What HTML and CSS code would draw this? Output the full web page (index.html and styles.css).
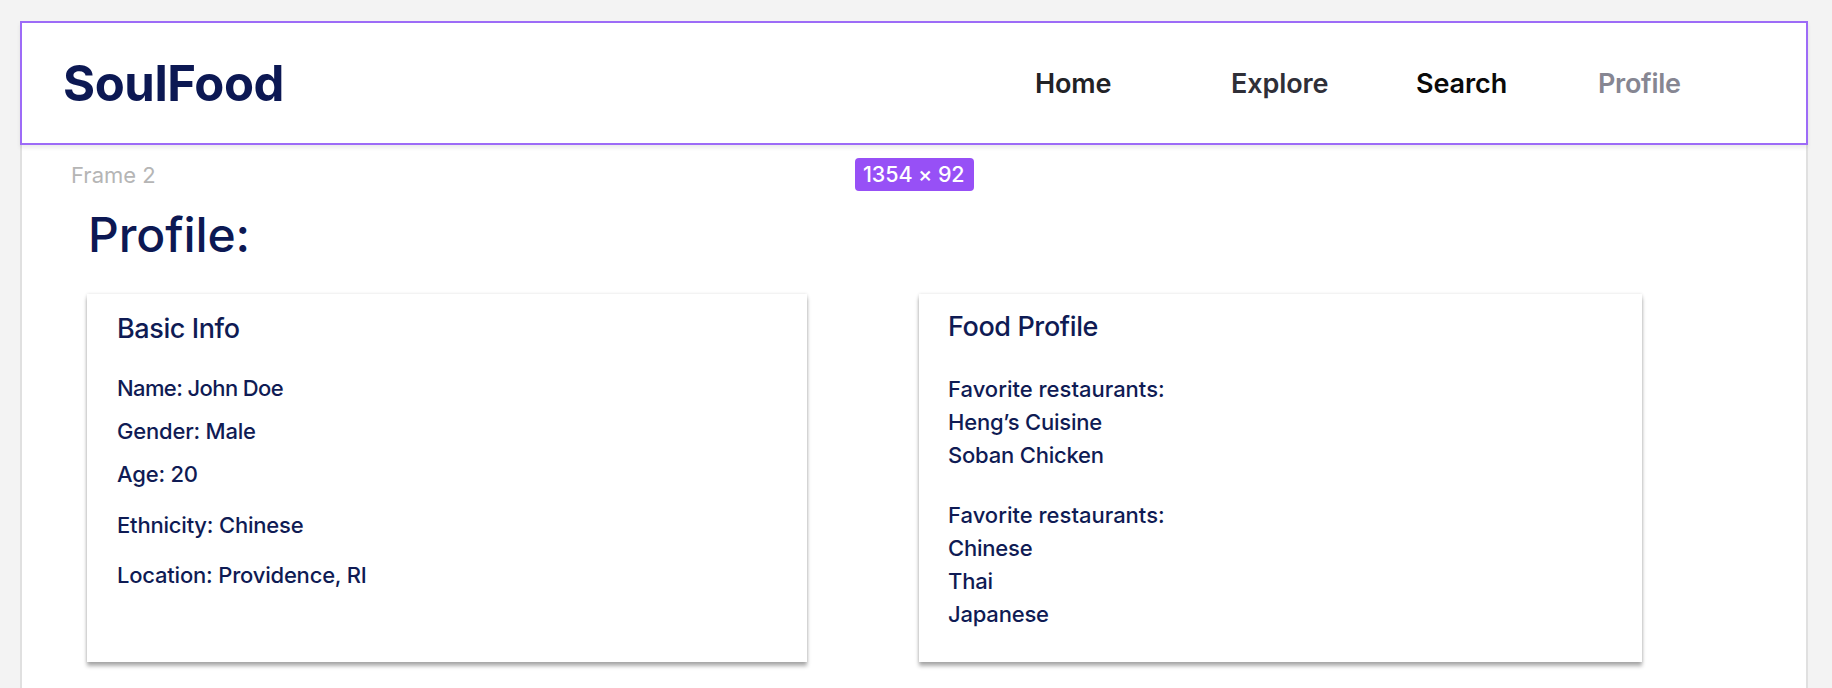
FILE: index.html
```html
<!DOCTYPE html>
<html lang="en">
<head>
<meta charset="utf-8">
<title>SoulFood – Profile</title>
<link rel="stylesheet" href="styles.css">
</head>
<body>
<div class="frame">
  <header class="nav">
    <div class="logo">SoulFood</div>
    <a class="nav-link home" href="#">Home</a>
    <a class="nav-link explore" href="#">Explore</a>
    <a class="nav-link search" href="#">Search</a>
    <a class="nav-link profile" href="#">Profile</a>
  </header>
  <main class="frame-body">
    <div class="label-row">
      <span class="frame-label">Frame 2</span>
      <span class="size-badge">1354 × 92</span>
    </div>
    <h1 class="page-title">Profile:</h1>
    <div class="cards">
      <section class="card card-basic">
        <h2 class="card-title">Basic Info</h2>
        <p class="row first">Name: John Doe</p>
        <p class="row">Gender: Male</p>
        <p class="row">Age: 20</p>
        <p class="row wide">Ethnicity: Chinese</p>
        <p class="row wide2">Location: Providence, RI</p>
      </section>
      <section class="card card-food">
        <h2 class="card-title">Food Profile</h2>
        <div class="group first">
          <p class="line">Favorite restaurants:</p>
          <p class="line">Heng’s Cuisine</p>
          <p class="line">Soban Chicken</p>
        </div>
        <div class="group">
          <p class="line">Favorite restaurants:</p>
          <p class="line">Chinese</p>
          <p class="line">Thai</p>
          <p class="line">Japanese</p>
        </div>
      </section>
    </div>
  </main>
</div>
</body>
</html>
```
FILE: styles.css
```css
* { box-sizing: border-box; }

html, body {
  margin: 0;
  padding: 0;
}

body {
  background: #f3f3f3;
  font-family: Inter, "Noto Sans", "Liberation Sans", sans-serif;
  color: #0f1b54;
  overflow: hidden;
}

.frame {
  margin: 21px 0 0 20px;
  width: 1788px;
  background: #ffffff;
}

.nav {
  height: 124px;
  border: 2px solid #9d6bf7;
  display: grid;
  grid-template-columns: 1fr 196px 185px 182px 208px;
  align-items: center;
  padding-left: 41px;
  background: #ffffff;
  box-shadow: 0 3px 4px rgba(0, 0, 0, 0.08);
  position: relative;
  z-index: 1;
}

.logo {
  font-size: 49px;
  font-weight: 700;
  color: #0c1853;
  letter-spacing: -0.4px;
  line-height: 1;
}

.nav-link {
  font-size: 27px;
  font-weight: 600;
  text-decoration: none;
  line-height: 1;
  letter-spacing: -0.1px;
}

.nav-link.home { color: #222226; }
.nav-link.explore { color: #2f2f38; }
.nav-link.search { color: #0a0a0a; }
.nav-link.profile { color: #868692; letter-spacing: -0.3px; }

.frame-body {
  border-left: 2px solid #e0e0e0;
  border-right: 2px solid #e0e0e0;
  padding: 0 0 40px 0;
  min-height: 560px;
}

.label-row {
  display: flex;
  align-items: flex-start;
  padding-top: 13px;
  height: 47px;
}

.frame-label {
  margin-left: 49px;
  font-size: 22px;
  line-height: 34px;
  margin-top: 0;
  color: #b5b5b5;
  width: 784px;
}

.size-badge {
  background: #9750f6;
  color: #ffffff;
  font-size: 21.5px;
  font-weight: 500;
  line-height: 33px;
  height: 33px;
  padding: 0 9px 0 8px;
  border-radius: 4px;
  letter-spacing: -0.1px;
}

.page-title {
  margin: 14px 0 0 66px;
  font-size: 48px;
  font-weight: 500;
  line-height: 58px;
  color: #0c1853;
  letter-spacing: -0.1px;
}

.cards {
  display: flex;
  gap: 112px;
  margin: 30px 0 0 65px;
}

.card {
  background: #ffffff;
  height: 368px;
  box-shadow: 0 4px 4px rgba(0, 0, 0, 0.32), 0 0 3px rgba(0, 0, 0, 0.12);
}

.card-basic {
  width: 720px;
  padding: 18px 0 0 30px;
}

.card-food {
  width: 723px;
  padding: 16px 0 0 29px;
}

.card-title {
  margin: 0;
  font-size: 27px;
  font-weight: 500;
  line-height: 33px;
  letter-spacing: -0.4px;
}

.row, .line {
  margin: 0;
  font-size: 22px;
  font-weight: 500;
  line-height: 33px;
  letter-spacing: -0.2px;
}

.row { margin-top: 10px; }
.row.first { margin-top: 27px; letter-spacing: -0.6px; }
.row.wide { margin-top: 18px; }
.row.wide2 { margin-top: 17px; }

.group { margin-top: 27px; }
.group.first { margin-top: 30px; }
.group .line:first-child { letter-spacing: 0; }
```
